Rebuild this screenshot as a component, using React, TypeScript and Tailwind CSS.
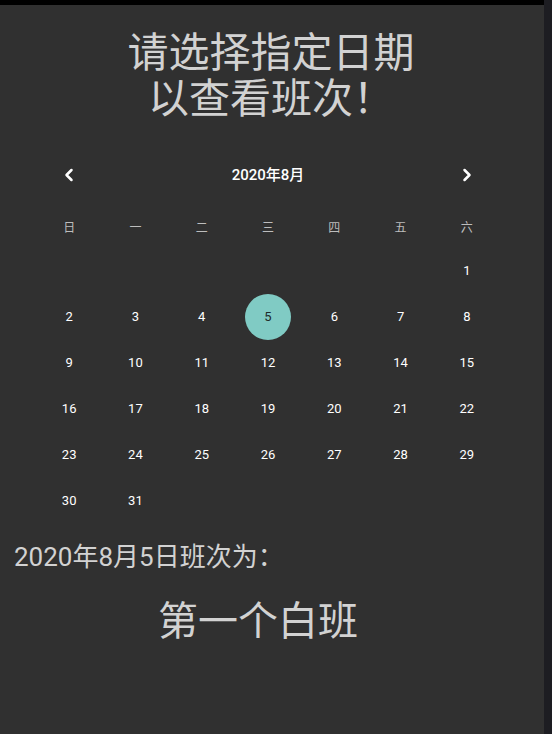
import { ChevronLeft, ChevronRight } from "lucide-react";

const WEEKDAYS = ["日", "一", "二", "三", "四", "五", "六"];
const FONT = "font-['Roboto','Noto_Sans_CJK_SC',sans-serif]";

// 2020年8月 starts on Saturday
const CELLS: (number | null)[] = [
  ...Array(6).fill(null),
  ...Array.from({ length: 31 }, (_, i) => i + 1),
];

export default function App() {
  const selected = 5;
  return (
    <div className={`flex h-[734px] w-[552px] overflow-hidden ${FONT}`}>
      <div className="flex flex-1 flex-col bg-[#303030]">
        <div className="h-[5px] bg-black" />

        {/* 标题 */}
        <div className="pt-[25px] pr-[2px] text-center text-[41px] leading-[46px] text-[#d2d2d2]">
          <div>请选择指定日期</div>
          <div>以查看班次！</div>
        </div>

        {/* 日历 */}
        <div className="ml-[36px] mt-[30px] w-[464px]">
          <div className="flex h-[46px] items-center justify-between">
            <div className="flex w-[66px] justify-center text-white">
              <ChevronLeft size={20} strokeWidth={3} />
            </div>
            <div className="text-[15px] font-medium text-white">2020年8月</div>
            <div className="flex w-[66px] justify-center text-white">
              <ChevronRight size={20} strokeWidth={3} />
            </div>
          </div>

          <div className="mt-[10px] grid h-[40px] grid-cols-7 items-center">
            {WEEKDAYS.map((w) => (
              <div key={w} className="text-center text-[12px] text-[#bdbdbd]">
                {w}
              </div>
            ))}
          </div>

          <div className="grid grid-cols-7">
            {CELLS.map((d, i) => (
              <div key={i} className="flex h-[46px] items-center justify-center">
                {d === null ? null : d === selected ? (
                  <div className="flex h-[46px] w-[46px] items-center justify-center rounded-full bg-[#80cbc4] text-[13px] text-[#1e2b2a]">
                    {d}
                  </div>
                ) : (
                  <span className="text-[13px] text-white">{d}</span>
                )}
              </div>
            ))}
          </div>
        </div>

        {/* 结果 */}
        <div className="ml-[14px] mt-[17px] text-[26px] leading-[32px] text-[#d2d2d2]">
          2020年8月5日班次为：
        </div>
        <div className="mt-[25px] pr-[28px] text-center text-[40px] leading-[48px] text-[#d2d2d2]">
          第一个白班
        </div>
      </div>
      <div className="w-[8px] bg-[#1d1d22]" />
    </div>
  );
}
